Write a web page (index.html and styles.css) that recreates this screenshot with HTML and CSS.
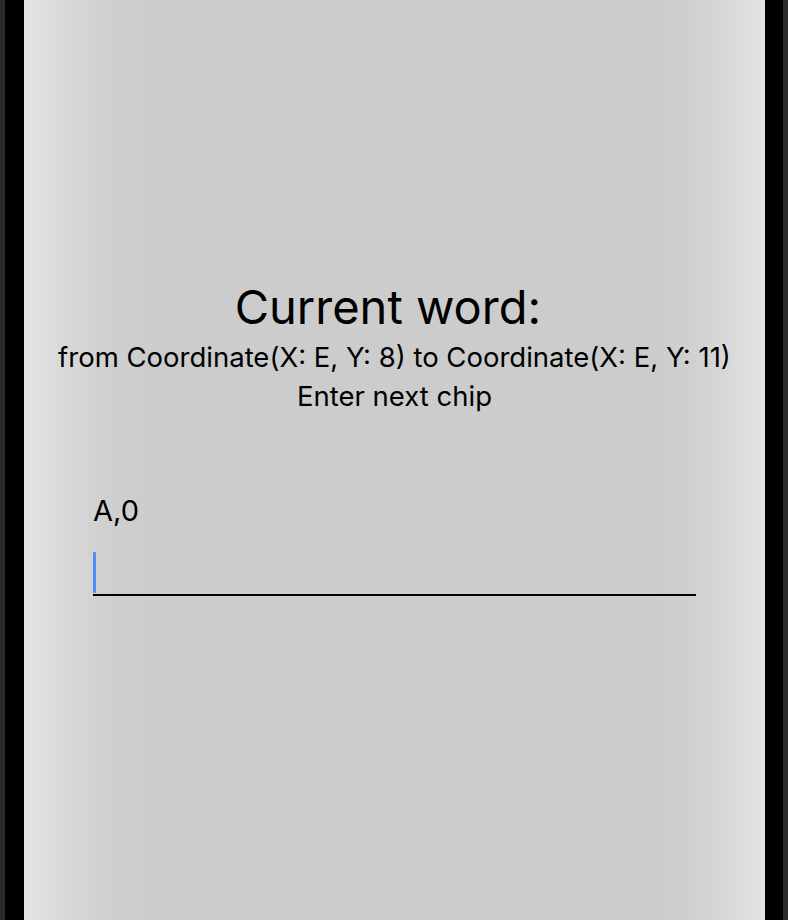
FILE: index.html
```html
<!DOCTYPE html>
<html>
<head>
<meta charset="utf-8">
<link rel="stylesheet" href="styles.css">
</head>
<body>
<div class="frame">
  <div class="edge"></div>
  <div class="bezel"></div>
  <main class="screen">
    <h1 class="title">Current word:&nbsp;</h1>
    <p class="line">from Coordinate(X: E, Y: 8) to Coordinate(X: E, Y: 11)</p>
    <p class="line">Enter next chip</p>
    <div class="field">
      <div class="label">A,0</div>
      <div class="input"><span class="caret"></span></div>
    </div>
  </main>
  <div class="bezel bezel-right"></div>
  <div class="edge"></div>
</div>
</body>
</html>
```
FILE: styles.css
```css
html, body {
  margin: 0;
  padding: 0;
  background: #000;
}
.frame {
  display: flex;
  width: 788px;
  height: 920px;
}
.edge {
  width: 5px;
  background: #2a2a2a;
}
.bezel {
  width: 19px;
  background: #000;
}
.bezel-right {
  width: 18px;
}
.screen {
  width: 741px;
  height: 920px;
  background: linear-gradient(to right, #e4e4e4 0px, #d8d8d8 40px, #cfcfcf 90px, #cccccc 135px, #cccccc 630px, #cfcfcf 660px, #d8d8d8 705px, #e4e4e4 741px);
  font-family: Inter, "Noto Sans", sans-serif;
  color: #000;
  text-align: center;
  padding-top: 276px;
  box-sizing: border-box;
}
.title {
  margin: 0;
  font-size: 47px;
  font-weight: 400;
  line-height: 62px;
  white-space: pre;
}
.line {
  margin: 0;
  font-size: 27.5px;
  line-height: 39px;
}
.field {
  margin: 76px 69px 0 69px;
  text-align: left;
}
.label {
  font-size: 29px;
  line-height: 38px;
}
.input {
  margin-top: 22px;
  height: 42px;
  width: 603px;
  border-bottom: 2px solid #000;
  display: flex;
  align-items: flex-end;
}
.caret {
  display: block;
  width: 3px;
  height: 41px;
  margin-bottom: 1px;
  background: #4f8ef7;
  border-radius: 1px;
}
```
